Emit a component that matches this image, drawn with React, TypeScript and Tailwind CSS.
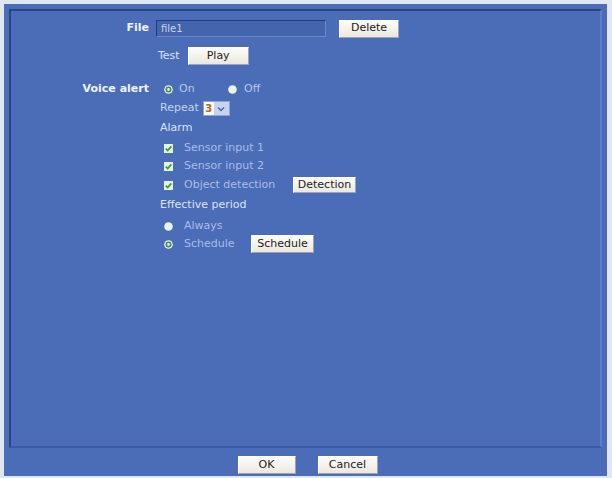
import type { ReactNode } from "react";

const font = { fontFamily: '"DejaVu Sans", Verdana, sans-serif' };

function Btn({ children, w, h = 18 }: { children: ReactNode; w: string; h?: number }) {
  return (
    <button
      type="button"
      className={`${w} flex items-center justify-center border border-t-[#ffffff] border-l-[#ffffff] border-r-[#9aa3b8] border-b-[#9aa3b8] bg-gradient-to-b from-[#fdfcf8] to-[#ebe8de] text-[11px] text-[#1c1c1c]`}
      style={{ height: h }}
    >
      {children}
    </button>
  );
}

function Radio({ checked }: { checked?: boolean }) {
  return (
    <svg width="9" height="9" viewBox="0 0 9 9" className="shrink-0">
      <circle cx="4.5" cy="4.5" r="4.3" fill="#eaf3e6" />
      {checked ? <circle cx="4.5" cy="4.5" r="2.2" fill="none" stroke="#3e8a52" strokeWidth="1.6" /> : null}
    </svg>
  );
}

function Check() {
  return (
    <svg width="9" height="9" viewBox="0 0 9 9" className="shrink-0">
      <rect x="0" y="0" width="9" height="9" fill="#e4f1de" />
      <path d="M1.8 4.6 L3.7 6.6 L7.3 2.4" fill="none" stroke="#3c9a3a" strokeWidth="1.7" />
    </svg>
  );
}

function Row({ label, bold, h, mt, children }: { label?: string; bold?: boolean; h: number; mt: number; children?: ReactNode }) {
  return (
    <div className="flex items-center" style={{ height: h, marginTop: mt }}>
      <div className={`w-[138px] shrink-0 text-right text-[11px] ${bold ? "font-bold text-[#eef3ff]" : "text-[#dbe4f6]"}`}>
        {label}
      </div>
      <div className="ml-[7px] flex h-full items-center">{children}</div>
    </div>
  );
}

export default function App() {
  return (
    <div className="h-[478px] w-[612px] overflow-hidden bg-[#dfe7f0] pl-[4px] pt-[4px]" style={font}>
      <div className="flex h-[472px] w-[603px] flex-col bg-[#4b6cb7] px-[5px] pt-[5px]">
        <div className="h-[439px] border-2 border-t-[#2a4587] border-l-[#2a4587] border-r-[#5f7ec3] border-b-[#3c5aa2]">
          <Row label="File" bold h={17} mt={9}>
            <div className="flex h-[17px] w-[170px] items-center border border-t-[#263c7a] border-l-[#263c7a] border-r-[#6b87c6] border-b-[#6b87c6] bg-[#4464ae] pl-[4px] text-[10px] text-[#c9d4ec]">
              file1
            </div>
            <div className="ml-[13px]">
              <Btn w="w-[60px]">Delete</Btn>
            </div>
          </Row>

          <Row h={18} mt={10}>
            <span className="ml-[2px] text-[11px] text-[#dbe4f6]">Test</span>
            <div className="ml-[8px]">
              <Btn w="w-[61px]">Play</Btn>
            </div>
          </Row>

          <Row label="Voice alert" bold h={16} mt={16}>
            <div className="ml-[8px] flex items-center text-[11px] text-[#b9c9ec]">
              <Radio checked />
              <span className="ml-[6px] w-[49px]">On</span>
              <Radio />
              <span className="ml-[7px]">Off</span>
            </div>
          </Row>

          <Row h={15} mt={4}>
            <span className="ml-[4px] text-[11px] text-[#c5d3f0]">Repeat</span>
            <div className="ml-[4px] flex h-[15px] items-center border border-[#8fa4d6]">
              <div className="flex h-full w-[10px] items-center justify-center bg-[#f6f7fb] text-[10px] font-bold text-[#b0651a]">3</div>
              <div className="flex h-full w-[15px] items-center justify-center bg-[#c8d4ee]">
                <svg width="8" height="6" viewBox="0 0 8 6">
                  <path d="M1 1.5 L4 4.5 L7 1.5" fill="none" stroke="#4b64a8" strokeWidth="1.5" />
                </svg>
              </div>
            </div>
          </Row>

          <Row h={14} mt={5}>
            <span className="ml-[4px] text-[11px] text-[#dbe4f6]">Alarm</span>
          </Row>

          <Row h={14} mt={6}>
            <div className="ml-[8px] flex items-center text-[11px] text-[#a9bde8]">
              <Check />
              <span className="ml-[11px]">Sensor input 1</span>
            </div>
          </Row>
          <Row h={14} mt={4}>
            <div className="ml-[8px] flex items-center text-[11px] text-[#a9bde8]">
              <Check />
              <span className="ml-[11px]">Sensor input 2</span>
            </div>
          </Row>
          <Row h={16} mt={4}>
            <div className="ml-[8px] flex items-center text-[11px] text-[#a9bde8]">
              <Check />
              <span className="ml-[11px] w-[109px]">Object detection</span>
              <Btn w="w-[63px]" h={16}>Detection</Btn>
            </div>
          </Row>

          <Row h={14} mt={5}>
            <span className="ml-[4px] text-[11px] text-[#dbe4f6]">Effective period</span>
          </Row>

          <Row h={14} mt={7}>
            <div className="ml-[8px] flex items-center text-[11px] text-[#a9bde8]">
              <Radio />
              <span className="ml-[11px]">Always</span>
            </div>
          </Row>
          <Row h={18} mt={2}>
            <div className="ml-[8px] flex items-center text-[11px] text-[#a9bde8]">
              <Radio checked />
              <span className="ml-[11px] w-[67px]">Schedule</span>
              <Btn w="w-[63px]">Schedule</Btn>
            </div>
          </Row>
        </div>

        <div className="mt-[8px] flex justify-center gap-[22px] pl-[4px]">
          <Btn w="w-[58px]">OK</Btn>
          <Btn w="w-[60px]">Cancel</Btn>
        </div>
      </div>
    </div>
  );
}
